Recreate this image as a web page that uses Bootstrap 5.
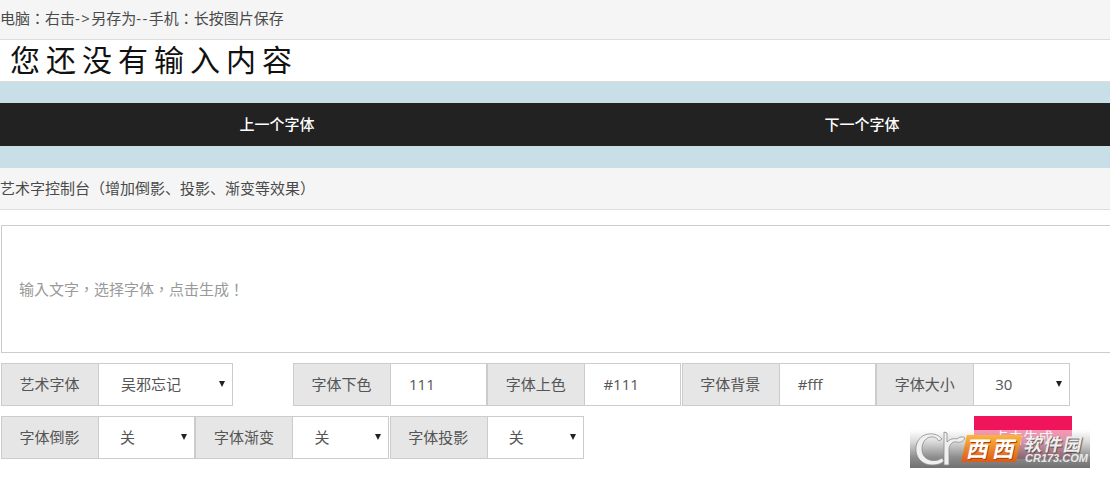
<!DOCTYPE html>
<html lang="zh-CN">
<head>
    <meta charset="UTF-8">
    <meta name="viewport" content="width=device-width, initial-scale=1.0">
    <title>艺术字生成</title>
    <link href="https://cdn.jsdelivr.net/npm/bootstrap@5.3.0/dist/css/bootstrap.min.css" rel="stylesheet">
    <style>
        body {
            font-family: "Open Sans", "Noto Sans CJK SC", sans-serif;
            font-size: 15px;
            color: #555;
            background: #fff;
            overflow: hidden;
            height: 478px;
            text-spacing-trim: space-all;
        }
        .head-bar {
            height: 40px;
            line-height: 36px;
            background: #f5f5f5;
            border-bottom: 1px solid #ddd;
            color: #4a4a4a;
        }
        .head-two { height: 42px; line-height: 39px; }
        .punct { font-family: "Noto Sans CJK TC", sans-serif; }
        .dash { letter-spacing: 1.4px; }
        .art-box {
            height: 42px;
            line-height: 40px;
            padding-left: 10px;
            border-bottom: 1px solid #ddd;
            font-size: 30px;
            letter-spacing: 6px;
            color: #111;
        }
        .switch-band {
            background: #c9dfe7;
            padding: 21px 0 22px;
        }
        .switch-bar { background: #222; height: 43px; }
        .switch-bar a {
            color: #fff;
            line-height: 42px;
            text-decoration: none;
            font-weight: 500;
        }
        .switch-left { width: 554px; }
        .switch-right { width: 496px; margin-left: 60px; }
        .text-input {
            display: block;
            width: 1120px;
            height: 128px;
            margin: 15px 0 10px 1px;
            padding: 0 17px;
            border: 1px solid #ccc;
            border-radius: 0;
            color: #555;
            font-family: "Noto Sans CJK TC", sans-serif;
            font-size: 15px;
            outline: 0;
            resize: none;
            line-height: 126px;
        }
        .text-input::placeholder { color: #999; opacity: 1; }
        .tool-row { height: 43px; padding-left: 1px; margin-bottom: 10px; }
        .cell-label, .cell-value {
            height: 43px;
            line-height: 41px;
            border: 1px solid #ccc;
            flex: none;
        }
        .cell-label {
            width: 97px;
            padding-right: 1px;
            background: #e6e6e6;
            text-align: center;
            border-right: 0;
        }
        .cell-value {
            width: 96.9px;
            margin-right: .5px;
            background: #fff;
            padding-left: 18px;
            position: relative;
        }
        .cell-value.is-select { padding-left: 21px; }
        .cell-value.cell-wide { width: 134.6px; margin-right: 60.4px; padding-left: 22px; }
        .cell-value.is-select::after {
            content: "";
            position: absolute;
            right: 7px;
            top: 17px;
            border-style: solid;
            border-width: 6px 3px 0;
            border-color: #222 transparent transparent;
        }
        .make-btn {
            width: 98px;
            height: 43px;
            margin-left: 390px;
            padding: 0;
            border: 0;
            border-radius: 0;
            background: #f0145a;
            color: #fff;
            font-size: 15px;
        }
        .make-btn:hover { background: #f0145a; color: #fff; }
        .mark-logo {
            position: absolute;
            left: 910px;
            top: 430px;
            width: 180px;
            height: 38px;
            background: linear-gradient(rgba(255,255,255,.55) 0, rgba(205,205,205,.7) 30%, rgba(120,120,120,.85) 72%, rgba(105,105,105,.95) 100%);
        }
        .mark-logo svg { position: absolute; left: 4px; top: 0; }
        .mark-west {
            position: absolute;
            top: 5px;
            width: 29px;
            height: 27px;
            text-align: center;
            font-size: 22px;
            line-height: 26px;
            font-weight: 700;
            color: #fff;
            text-shadow: 1px 1px 0 #a8400f;
            background: linear-gradient(#fbb63f, #dd5a17);
            transform: skewX(-12deg);
        }
        .west-one { left: 54px; }
        .west-two { left: 80px; }
        .mark-soft {
            position: absolute;
            left: 115px;
            top: 4px;
            font-size: 18px;
            line-height: 20px;
            font-weight: 700;
            letter-spacing: 1.5px;
            color: #eee;
            white-space: nowrap;
            text-shadow: 1px 1px 1px #444;
            transform: skewX(-12deg);
        }
        .mark-site {
            position: absolute;
            left: 115px;
            top: 22px;
            font: italic 700 11px/12px "Liberation Sans", sans-serif;
            color: #e8e8e8;
            white-space: nowrap;
        }
    </style>
</head>
<body>
    <div class="head-bar">电脑<span class="punct" lang="zh-TW">：</span>右击<span class="dash">-&gt;</span>另存为<span class="dash">--</span>手机<span class="punct" lang="zh-TW">：</span>长按图片保存</div>
    <div class="art-box">您还没有输入内容</div>
    <div class="switch-band">
        <div class="switch-bar d-flex text-center">
            <a class="switch-left" href="#">上一个字体</a>
            <a class="switch-right" href="#">下一个字体</a>
        </div>
    </div>
    <div class="head-bar head-two">艺术字控制台<span class="punct" lang="zh-TW">（</span>增加倒影、投影、渐变等效果<span class="punct" lang="zh-TW">）</span></div>
    <textarea class="text-input" lang="zh-TW" placeholder="输入文字，选择字体，点击生成！"></textarea>
    <div class="tool-row d-flex">
        <div class="cell-label">艺术字体</div>
        <div class="cell-value cell-wide is-select">吴邪忘记</div>
        <div class="cell-label">字体下色</div>
        <div class="cell-value">111</div>
        <div class="cell-label">字体上色</div>
        <div class="cell-value">#111</div>
        <div class="cell-label">字体背景</div>
        <div class="cell-value">#fff</div>
        <div class="cell-label">字体大小</div>
        <div class="cell-value is-select">30</div>
    </div>
    <div class="tool-row d-flex">
        <div class="cell-label">字体倒影</div>
        <div class="cell-value is-select">关</div>
        <div class="cell-label">字体渐变</div>
        <div class="cell-value is-select">关</div>
        <div class="cell-label">字体投影</div>
        <div class="cell-value is-select">关</div>
        <button class="btn make-btn" type="button">点击生成</button>
    </div>
    <div class="mark-logo">
        <svg width="52" height="38" viewBox="0 0 52 38">
            <path d="M28 9C23 2 8 1 3 13c-4 11 3 22 15 22 5 0 9-1 12-4l-2-3c-7 5-20 3-20-9C8 7 20 3 25 11z" fill="#f0f0f0" stroke="#8a8a8a" stroke-width=".8"/>
            <path d="M30 35V2l3 1v9c3-3 7-4 10-3 2-2 6-3 8-1-1 3-5 5-8 4-4-1-7 2-8 6v17z" fill="#f0f0f0" stroke="#8a8a8a" stroke-width=".8"/>
        </svg>
        <span class="mark-west west-one">西</span>
        <span class="mark-west west-two">西</span>
        <span class="mark-soft">软件园</span>
        <span class="mark-site">CR173.COM</span>
    </div>
</body>
</html>
